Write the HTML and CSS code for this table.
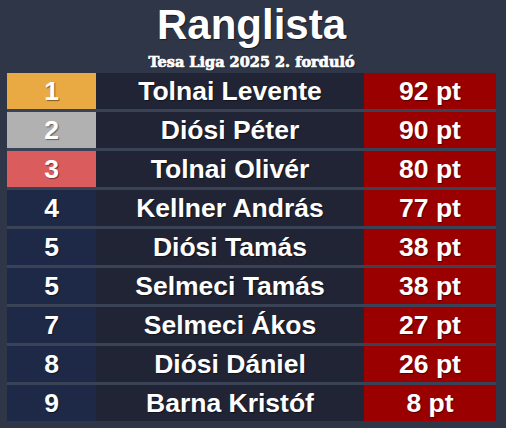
FILE: index.html
```html
<!DOCTYPE html>
<html lang="hu">
<head>
<meta charset="utf-8">
<title>Ranglista</title>
<link rel="stylesheet" href="styles.css">
</head>
<body>
<main class="board">
  <header class="head">
    <h1 class="title">Ranglista</h1>
    <p class="subtitle">Tesa Liga 2025 2. forduló</p>
  </header>
  <div class="table">
    <div class="row"><div class="rank gold">1</div><div class="name">Tolnai Levente</div><div class="pts">92 pt</div></div>
    <div class="row"><div class="rank silver">2</div><div class="name">Diósi Péter</div><div class="pts">90 pt</div></div>
    <div class="row"><div class="rank bronze">3</div><div class="name">Tolnai Olivér</div><div class="pts">80 pt</div></div>
    <div class="row"><div class="rank">4</div><div class="name">Kellner András</div><div class="pts">77 pt</div></div>
    <div class="row"><div class="rank">5</div><div class="name">Diósi Tamás</div><div class="pts">38 pt</div></div>
    <div class="row"><div class="rank">5</div><div class="name">Selmeci Tamás</div><div class="pts">38 pt</div></div>
    <div class="row"><div class="rank">7</div><div class="name">Selmeci Ákos</div><div class="pts">27 pt</div></div>
    <div class="row"><div class="rank">8</div><div class="name">Diósi Dániel</div><div class="pts">26 pt</div></div>
    <div class="row"><div class="rank">9</div><div class="name">Barna Kristóf</div><div class="pts">8 pt</div></div>
  </div>
</main>
</body>
</html>
```

FILE: styles.css
```css
html, body {
  margin: 0;
  padding: 0;
  background: #2e3648;
}
body {
  width: 506px;
  height: 428px;
  overflow: hidden;
  font-family: "Liberation Sans", Arial, sans-serif;
  color: #ffffff;
}
.board {
  margin-left: 7px;
  width: 489px;
}
.head {
  text-align: center;
  height: 73px;
  box-sizing: border-box;
}
.title {
  margin: 0;
  padding-top: 2px;
  font-size: 42px;
  line-height: 46px;
  font-weight: bold;
  text-shadow: 1px 1px 1px rgba(0,0,0,0.5);
}
.subtitle {
  margin: 0;
  padding-top: 2px;
  font-family: "DejaVu Serif", "Liberation Serif", serif;
  font-weight: bold;
  font-size: 14.5px;
  line-height: 24px;
  -webkit-text-stroke: 0.7px #ffffff;
  text-shadow: 1px 1px 1px rgba(0,0,0,0.5);
}
.table {
  display: flex;
  flex-direction: column;
  gap: 3px;
  background: #3a4356;
}
.row {
  display: grid;
  grid-template-columns: 89px 268px 132px;
  height: 36px;
}
.row > div {
  display: flex;
  align-items: center;
  justify-content: center;
  font-weight: bold;
  font-size: 26.5px;
  text-shadow: 1px 1px 1px rgba(0,0,0,0.45);
}
.rank { background: #1d2947; }
.rank.gold { background: #e9aa43; }
.rank.silver { background: #b1b1b1; }
.rank.bronze { background: #db5c5c; }
.name { background: #212434; }
.pts { background: #9a0000; }
```
